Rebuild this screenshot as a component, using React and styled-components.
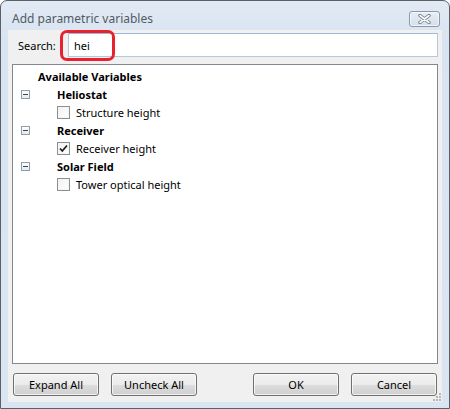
import React from 'react';
import styled, { createGlobalStyle } from 'styled-components';

const GlobalStyle = createGlobalStyle`
	html, body {
		margin: 0;
		padding: 0;
		background: #ffffff;
	}
	body {
		font-family: 'Noto Sans', 'Open Sans', sans-serif;
		font-size: 11px;
		color: #000;
	}
`;

const tree = [
	{ name: 'Heliostat', items: [{ label: 'Structure height', checked: false }] },
	{ name: 'Receiver', items: [{ label: 'Receiver height', checked: true }] },
	{ name: 'Solar Field', items: [{ label: 'Tower optical height', checked: false }] },
];

const Window = styled.div`
	box-sizing: border-box;
	width: 450px;
	height: 409px;
	display: flex;
	flex-direction: column;
	border: 1px solid #5b6068;
	border-radius: 7px 7px 0 0;
	background: linear-gradient(#e2eaf4, #d8e4f1 40px, #dae5f2);
	padding: 0 7px 6px;
	overflow: hidden;
`;

const TitleBar = styled.div`
	height: 29px;
	display: flex;
	align-items: flex-start;
	justify-content: space-between;
	margin: 0 -7px;
	padding: 0 9px 0 11px;
`;

const Title = styled.span`
	margin-top: 10px;
	font-size: 12px;
	line-height: 16px;
	color: #525a64;
`;

const CloseButton = styled.div`
	box-sizing: border-box;
	margin-top: 10px;
	width: 31px;
	height: 16px;
	border: 1px solid #8b98aa;
	border-radius: 3px;
	background: linear-gradient(#e8eef6, #d5dfeb);
	box-shadow: inset 0 0 0 1px rgba(255, 255, 255, 0.6);
	display: flex;
	align-items: center;
	justify-content: center;
`;

const Body = styled.div`
	flex: 1;
	display: flex;
	flex-direction: column;
	background: #f0f0f0;
	padding: 3px 4px 6px;
	position: relative;
`;

const SearchRow = styled.div`
	position: relative;
	display: flex;
	align-items: center;
	height: 24px;
`;

const SearchLabel = styled.label`
	width: 50px;
	padding-left: 6px;
	font-size: 11px;
`;

const SearchInput = styled.div`
	flex: 1;
	box-sizing: border-box;
	height: 24px;
	border: 1px solid #b3c9e0;
	border-top-color: #9cb8d6;
	background: #fff;
	padding-left: 5px;
	display: flex;
	align-items: center;
	font-size: 11px;
`;

const Highlight = styled.div`
	position: absolute;
	left: 48px;
	top: -3px;
	width: 55px;
	height: 31px;
	box-sizing: border-box;
	border: 3px solid #e8212d;
	border-radius: 7px;
	pointer-events: none;
`;

const TreePanel = styled.div`
	flex: 1;
	margin-top: 7px;
	border: 1px solid #828790;
	background: #fff;
	padding-top: 2px;
`;

const Row = styled.div`
	height: 18px;
	display: flex;
	align-items: center;
	padding-left: ${(p) => p.$indent}px;
	font-weight: ${(p) => (p.$bold ? 700 : 400)};
	white-space: nowrap;
`;

const Expander = styled.span`
	box-sizing: border-box;
	width: 9px;
	height: 9px;
	margin-right: 27px;
	border: 1px solid #919eae;
	background: linear-gradient(#ffffff, #e4e8ee);
	display: flex;
	align-items: center;
	justify-content: center;
	&::after {
		content: '';
		width: 5px;
		height: 1px;
		background: #3a4656;
	}
`;

const Check = styled.span`
	box-sizing: border-box;
	width: 13px;
	height: 13px;
	margin-right: 6px;
	border: 1px solid #8e8f8f;
	background: linear-gradient(135deg, #f2f2f2, #ffffff);
	box-shadow: inset 0 0 0 1px #f4f4f4;
	display: flex;
	align-items: center;
	justify-content: center;
`;

const ButtonRow = styled.div`
	display: flex;
	gap: 12px;
	margin-top: 9px;
	padding: 0 1px;
`;

const Spacer = styled.div`
	flex: 1;
`;

const Button = styled.div`
	box-sizing: border-box;
	width: 86px;
	height: 23px;
	border: 1px solid #707070;
	border-radius: 3px;
	background: linear-gradient(#f2f2f2 0%, #ebebeb 50%, #dddddd 51%, #cfcfcf 100%);
	box-shadow: inset 0 0 0 1px rgba(255, 255, 255, 0.7);
	display: flex;
	align-items: center;
	justify-content: center;
	font-size: 11px;
`;

const Grip = styled.svg`
	position: absolute;
	right: 1px;
	bottom: 1px;
`;

const CheckBox = ({ checked }) => (
	<Check>
		{checked && (
			<svg width="9" height="9" viewBox="0 0 9 9">
				<path d="M1 4.5 L3.3 7 L8 1.5" fill="none" stroke="#1e1e1e" strokeWidth="1.8" />
			</svg>
		)}
	</Check>
);

export default function App() {
	return (
		<>
			<GlobalStyle />
			<Window>
				<TitleBar>
					<Title>Add parametric variables</Title>
					<CloseButton>
						<svg width="13" height="10" viewBox="0 0 13 10">
							<path d="M2 1.5 L11 8.5 M11 1.5 L2 8.5" stroke="#6c7888" strokeWidth="3.4" strokeLinecap="round" />
							<path d="M2 1.5 L11 8.5 M11 1.5 L2 8.5" stroke="#ffffff" strokeWidth="1.6" strokeLinecap="round" />
						</svg>
					</CloseButton>
				</TitleBar>
				<Body>
					<SearchRow>
						<SearchLabel>Search:</SearchLabel>
						<SearchInput>hei</SearchInput>
						<Highlight />
					</SearchRow>
					<TreePanel>
						<Row $indent={25} $bold>Available Variables</Row>
						{tree.map((group) => (
							<React.Fragment key={group.name}>
								<Row $indent={8} $bold>
									<Expander />
									{group.name}
								</Row>
								{group.items.map((item) => (
									<Row key={item.label} $indent={44}>
										<CheckBox checked={item.checked} />
										{item.label}
									</Row>
								))}
							</React.Fragment>
						))}
					</TreePanel>
					<ButtonRow>
						<Button>Expand All</Button>
						<Button>Uncheck All</Button>
						<Spacer />
						<Button>OK</Button>
						<Button>Cancel</Button>
					</ButtonRow>
					<Grip width="8" height="8" viewBox="0 0 8 8">
						<g fill="#b5b5b5">
							<rect x="6" y="0" width="2" height="2" />
							<rect x="3" y="3" width="2" height="2" />
							<rect x="6" y="3" width="2" height="2" />
							<rect x="0" y="6" width="2" height="2" />
							<rect x="3" y="6" width="2" height="2" />
							<rect x="6" y="6" width="2" height="2" />
						</g>
					</Grip>
				</Body>
			</Window>
		</>
	);
}
